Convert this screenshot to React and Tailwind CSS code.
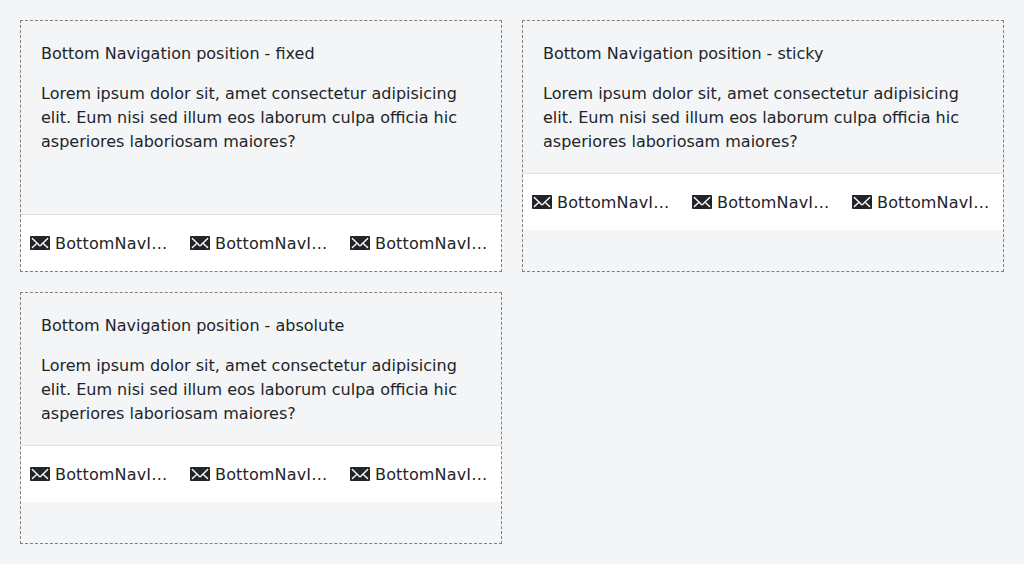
function MailIcon() {
  return (
    <svg className="h-3.5 w-5 shrink-0" viewBox="0 0 20 14" aria-hidden="true">
      <rect width="20" height="14" rx="1" fill="#212529" />
      <path
        d="M2.3 2.4L8.3 8.2L9.3 9.6H10.7L11.7 8.2L17.7 2.4M2.4 11.6L7.2 7M17.6 11.6L12.8 7"
        fill="none"
        stroke="#fff"
        strokeWidth="1.4"
        strokeLinecap="round"
        strokeLinejoin="round"
      />
    </svg>
  );
}

function BottomNav() {
  return (
    <nav className="grid h-[57px] shrink-0 grid-cols-3 border-t border-[#dee2e6] bg-white">
      {[0, 1, 2].map((item) => (
        <a key={item} className="flex min-w-0 items-center gap-[5px] pr-[11px] pl-[9px]">
          <MailIcon />
          <span className="min-w-0 truncate pt-0.5 tracking-[0.15px]">BottomNavItem</span>
        </a>
      ))}
    </nav>
  );
}

function Panel({ position, pinned }) {
  return (
    <section className="flex h-[252px] flex-col border border-dashed border-[#808080]">
      <div className={pinned ? "flex-1 px-5 pt-[21px] pb-[19px]" : "px-5 pt-[21px] pb-[19px]"}>
        <p className="mb-4">Bottom Navigation position - {position}</p>
        <p>
          Lorem ipsum dolor sit, amet consectetur adipisicing elit. Eum nisi sed
          illum eos laborum culpa officia hic asperiores laboriosam maiores?
        </p>
      </div>
      <BottomNav />
    </section>
  );
}

export default function App() {
  return (
    <main className="grid h-[564px] grid-cols-2 content-start gap-5 bg-[#f4f5f7] p-5 font-['DejaVu_Sans',sans-serif] text-base text-[#212529]">
      <Panel position="fixed" pinned />
      <Panel position="sticky" />
      <Panel position="absolute" />
    </main>
  );
}
